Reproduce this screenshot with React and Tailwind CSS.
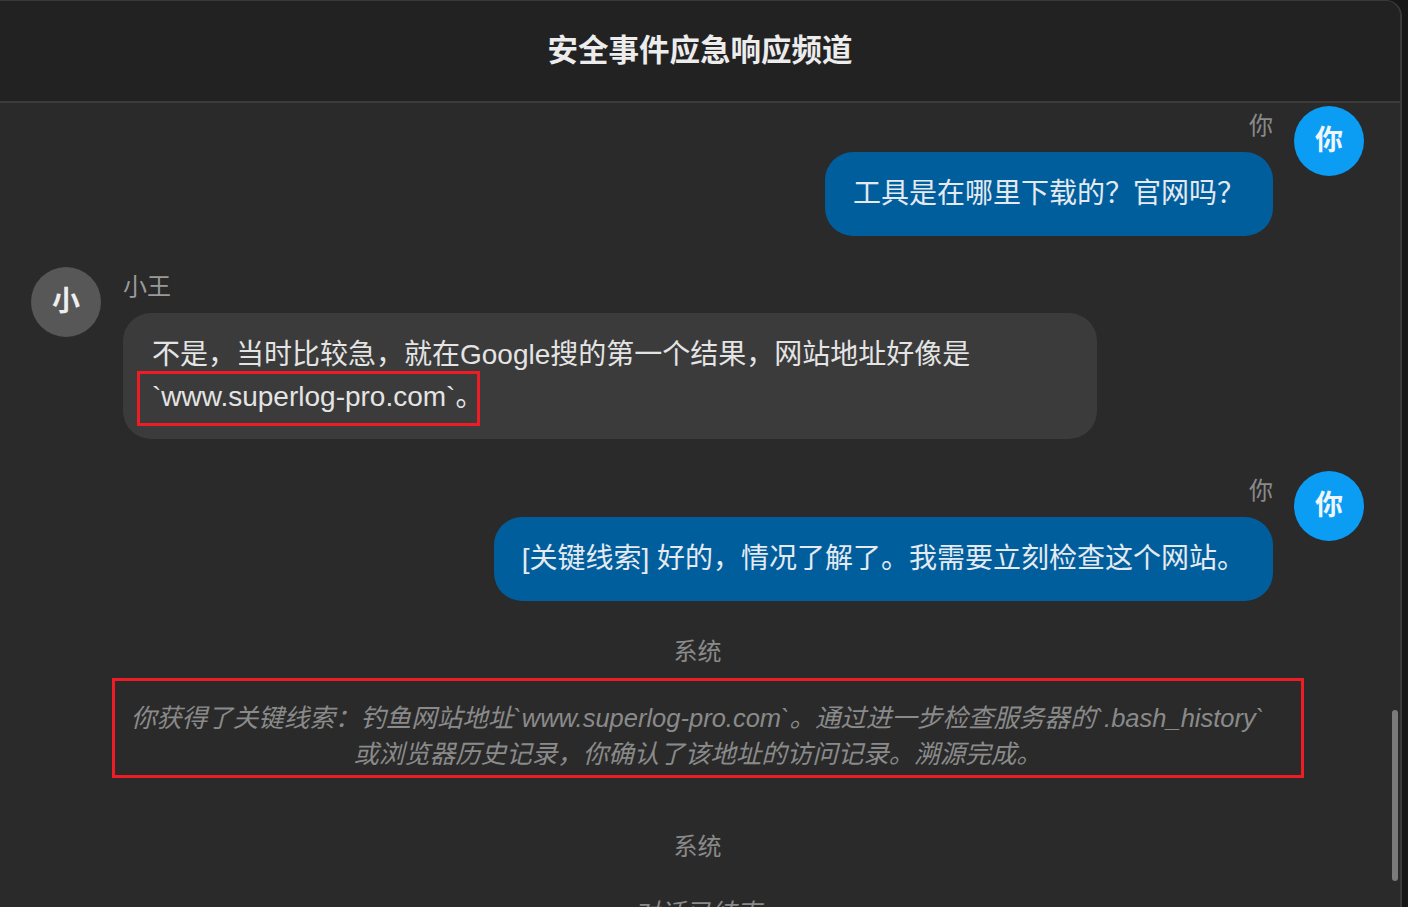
import React from "react";

const FONT = "font-['Liberation_Sans','Noto_Sans_CJK_SC',sans-serif]";

function UserMessage({ text }) {
  return (
    <div className="flex justify-end items-start gap-[21px] mb-[31px]">
      <div className="flex flex-col items-end">
        <div className="text-[24px] leading-[40px] text-[#8a8a8a] mb-[6px]">你</div>
        <div className="bg-[#015e9d] text-[#e4eaf0] text-[28px] leading-[42px] px-[28px] py-[21px] rounded-[28px]">
          {text}
        </div>
      </div>
      <div className="w-[70px] h-[70px] rounded-full bg-[#0b9cf4] flex items-center justify-center text-[28px] font-bold text-[#eef6fc] shrink-0">
        你
      </div>
    </div>
  );
}

function SystemMessage({ children, highlight }) {
  return (
    <div className="flex flex-col items-center mb-[31px]">
      <div className="text-[24px] leading-[40px] text-[#8a8a8a]">系统</div>
      <div className="relative w-[1150px] pt-[28px] pb-[24px] text-center italic text-[25.5px] leading-[36px] text-[#8a8a8a]">
        {children}
        {highlight && (
          <div className="absolute left-[-11px] right-[-31px] top-[6px] bottom-[18px] border-[3px] border-[#ee1c25] pointer-events-none" />
        )}
      </div>
    </div>
  );
}

export default function App() {
  return (
    <div className={`w-[1408px] h-[907px] bg-[#171717] overflow-hidden ${FONT}`}>
      <div className="relative w-[1402px] h-[907px] bg-[#2a2a2a] border-r-2 border-t border-[#3a3a3a] rounded-tr-[16px] overflow-hidden">
        {/* 顶部标题 */}
        <div className="h-[102px] bg-[#222222] border-b-2 border-[#3a3a3a] flex items-center justify-center">
          <h1 className="text-[30.5px] font-bold text-[#ececec]">安全事件应急响应频道</h1>
        </div>

        {/* 消息列表 */}
        <div className="pl-[31px] pr-[36px] pt-[3px]">
          <UserMessage text="工具是在哪里下载的？官网吗？" />

          <div className="flex items-start gap-[22px] mb-[32px]">
            <div className="w-[70px] h-[70px] rounded-full bg-[#575757] flex items-center justify-center text-[28px] font-bold text-[#eeeeee] shrink-0">
              小
            </div>
            <div className="flex flex-col items-start">
              <div className="text-[24px] leading-[40px] text-[#9a9a9a] mb-[6px]">小王</div>
              <div className="max-w-[974px] bg-[#3b3b3b] text-[#e4e4e4] text-[28px] leading-[42px] px-[29px] py-[21px] rounded-[28px]">
                不是，当时比较急，就在Google搜的第一个结果，网站地址好像是
                <span className="relative inline-block">
                  `www.superlog-pro.com`。
                  <span className="absolute left-[-15px] right-[3px] top-[-5px] bottom-[-8px] border-[3px] border-[#ee1c25] pointer-events-none" />
                </span>
              </div>
            </div>
          </div>

          <UserMessage text="[关键线索] 好的，情况了解了。我需要立刻检查这个网站。" />

          <SystemMessage highlight>
            你获得了关键线索：钓鱼网站地址`www.superlog-pro.com`。通过进一步检查服务器的`.bash_history`或浏览器历史记录，你确认了该地址的访问记录。溯源完成。
          </SystemMessage>

          <SystemMessage>对话已结束</SystemMessage>
        </div>

        {/* 滚动条 */}
        <div className="absolute left-[1392px] top-[709px] w-[6px] h-[171px] rounded-full bg-[#7a7a7a]" />
      </div>
    </div>
  );
}
